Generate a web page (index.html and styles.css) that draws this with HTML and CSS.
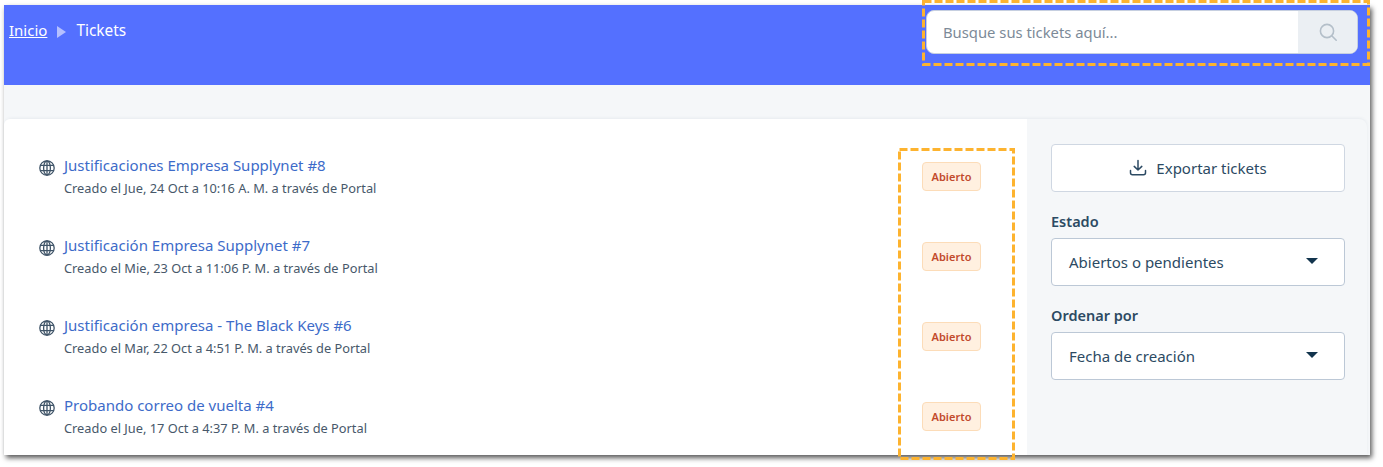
FILE: index.html
```html
<!DOCTYPE html>
<html lang="es">
<head>
  <meta charset="UTF-8">
  <title>Tickets</title>
  <link rel="stylesheet" href="styles.css">
</head>
<body>
  <div class="shot">
    <header class="banner">
      <nav class="crumbs">
        <a href="#" class="crumb-link">Inicio</a>
        <span class="crumb-arrow"></span>
        <span class="crumb-current">Tickets</span>
      </nav>
      <div class="search">
        <div class="search-input">Busque sus tickets aquí...</div>
        <div class="search-btn">
          <svg width="20" height="20" viewBox="0 0 20 20" fill="none" stroke="#b4bfc9" stroke-width="1.6" stroke-linecap="round"><circle cx="9" cy="9" r="6.6"/><path d="M14 14l4.2 4.2"/></svg>
        </div>
      </div>
    </header>
    <div class="band"></div>
    <div class="content">
      <main class="tickets">
        <div class="ticket">
          <svg class="globe" width="16" height="16" viewBox="0 0 16 16" fill="none" stroke="#3f5468" stroke-width="1.3"><circle cx="8" cy="8" r="7.2"/><ellipse cx="8" cy="8" rx="3.4" ry="7.2"/><path d="M8 .8v14.4M1.3 5.3h13.4M1.3 10.7h13.4"/></svg>
          <div class="ticket-text">
            <a href="#" class="ticket-title">Justificaciones Empresa Supplynet #8</a>
            <div class="ticket-meta">Creado el Jue, 24 Oct a 10:16 A. M. a través de Portal</div>
          </div>
          <span class="badge">Abierto</span>
        </div>
        <div class="ticket">
          <svg class="globe" width="16" height="16" viewBox="0 0 16 16" fill="none" stroke="#3f5468" stroke-width="1.3"><circle cx="8" cy="8" r="7.2"/><ellipse cx="8" cy="8" rx="3.4" ry="7.2"/><path d="M8 .8v14.4M1.3 5.3h13.4M1.3 10.7h13.4"/></svg>
          <div class="ticket-text">
            <a href="#" class="ticket-title">Justificación Empresa Supplynet #7</a>
            <div class="ticket-meta">Creado el Mie, 23 Oct a 11:06 P. M. a través de Portal</div>
          </div>
          <span class="badge">Abierto</span>
        </div>
        <div class="ticket">
          <svg class="globe" width="16" height="16" viewBox="0 0 16 16" fill="none" stroke="#3f5468" stroke-width="1.3"><circle cx="8" cy="8" r="7.2"/><ellipse cx="8" cy="8" rx="3.4" ry="7.2"/><path d="M8 .8v14.4M1.3 5.3h13.4M1.3 10.7h13.4"/></svg>
          <div class="ticket-text">
            <a href="#" class="ticket-title">Justificación empresa - The Black Keys #6</a>
            <div class="ticket-meta">Creado el Mar, 22 Oct a 4:51 P. M. a través de Portal</div>
          </div>
          <span class="badge">Abierto</span>
        </div>
        <div class="ticket">
          <svg class="globe" width="16" height="16" viewBox="0 0 16 16" fill="none" stroke="#3f5468" stroke-width="1.3"><circle cx="8" cy="8" r="7.2"/><ellipse cx="8" cy="8" rx="3.4" ry="7.2"/><path d="M8 .8v14.4M1.3 5.3h13.4M1.3 10.7h13.4"/></svg>
          <div class="ticket-text">
            <a href="#" class="ticket-title">Probando correo de vuelta #4</a>
            <div class="ticket-meta">Creado el Jue, 17 Oct a 4:37 P. M. a través de Portal</div>
          </div>
          <span class="badge">Abierto</span>
        </div>
      </main>
      <aside class="side">
        <button class="export">
          <svg width="18" height="18" viewBox="0 0 18 18" fill="none" stroke="#2c4a63" stroke-width="1.5" stroke-linecap="round" stroke-linejoin="round"><path d="M9 1.5v9.5M5.2 7.4L9 11l3.8-3.6M1.5 11.5v2.2c0 1.2.8 2 2 2h11c1.2 0 2-.8 2-2v-2.2"/></svg>
          Exportar tickets
        </button>
        <label class="side-label">Estado</label>
        <div class="select">Abiertos o pendientes<span class="caret"></span></div>
        <label class="side-label side-label-2">Ordenar por</label>
        <div class="select">Fecha de creación<span class="caret"></span></div>
      </aside>
    </div>
    <svg class="mark mark-search" width="448" height="66"><rect x="1.5" y="1.5" width="445" height="63"/></svg>
    <svg class="mark mark-badges" width="117" height="312"><rect x="1.5" y="1.5" width="114" height="309"/></svg>
  </div>
</body>
</html>
```

FILE: styles.css
```css
*{box-sizing:border-box}
html,body{height:467px}
body{margin:0;background:#fff;font-family:"Noto Sans","Open Sans",sans-serif;color:#2c4a63;overflow:hidden;padding:5px 0 0 4px}
.shot{position:relative;width:1366px;height:450px;background:#f5f7f9;box-shadow:2px 3px 5px rgba(0,0,0,.65)}
.banner{height:80px;background:#5470ff;display:flex;justify-content:space-between;align-items:flex-start;padding:5px 12px 0 5px}
.crumbs{display:flex;align-items:center;gap:10px;color:#fff;font-size:15px;height:40px}
.crumb-link{color:#fff}
.crumb-current{font-size:15.4px}
.crumb-arrow{width:0;height:0;border-left:9px solid #b5c0ff;border-top:6px solid transparent;border-bottom:6px solid transparent;margin-top:3px}
.search{width:432px;height:44px;display:flex;border:1px solid #c6cfe0;border-radius:8px;overflow:hidden;background:#fff}
.search-input{flex:1;padding:0 16px;display:flex;align-items:center;font-size:14.8px;color:#7c8a98}
.search-btn{width:59px;background:#ebeff3;display:flex;align-items:center;justify-content:center}
.band{height:34px}
.content{display:flex;height:336px;margin-right:3px;border-radius:8px 8px 0 0;box-shadow:0 -1px 3px rgba(60,80,110,.07)}
.tickets{width:1023px;background:#fff;padding:17px 46px 0 35px;border-radius:6px 0 0 0}
.ticket{height:80px;display:flex;align-items:center;gap:9px}
.globe{margin-top:-16px}
.ticket-text{flex:1;padding-top:1px}
.ticket-title{display:block;color:#3d6bc9;font-size:15px;line-height:22px;text-decoration:none}
.ticket-meta{font-size:12.8px;line-height:22px;color:#47586a;margin-top:1px}
.badge{width:59px;height:29px;display:flex;align-items:center;justify-content:center;background:#fff0e0;border:1px solid #fcdcb8;border-radius:4px;color:#c24a2c;font-size:11px;font-weight:600}
.side{flex:1;padding:25px 22px 0 24px}
.export{width:294px;height:48px;background:#fff;border:1px solid #cfd7e2;border-radius:4px;display:flex;align-items:center;justify-content:center;gap:9px;font:inherit;font-size:15px;color:#2c4a63}
.side-label{display:block;font-size:14.5px;font-weight:600;margin:18px 0 6px;line-height:22px}
.side-label-2{margin:18px 0 6px}
.select{width:294px;height:48px;background:#fff;border:1px solid #bcc8d6;border-radius:4px;display:flex;align-items:center;justify-content:space-between;padding:0 26px 1px 17px;font-size:15px}
.caret{width:0;height:0;border-top:6px solid #12344d;border-left:6.5px solid transparent;border-right:6.5px solid transparent;margin-top:-2px}
.mark{position:absolute;fill:none;stroke:#fdb32f;stroke-width:3;stroke-dasharray:8 3}
.mark-search{left:918px;top:-5px}
.mark-badges{left:894px;top:143px}
```
